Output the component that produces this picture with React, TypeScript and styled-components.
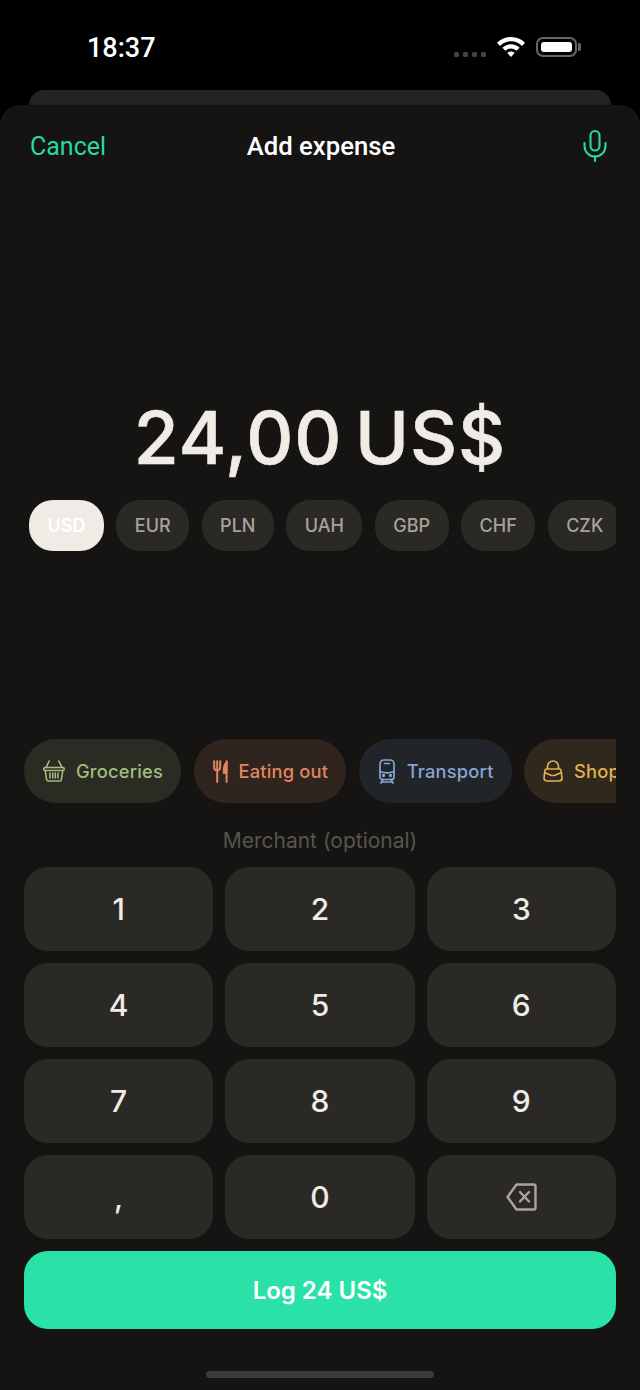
import { Mic } from 'lucide-react'
import styled, { createGlobalStyle } from 'styled-components'

const GlobalStyle = createGlobalStyle`
	html, body {
		margin: 0;
		padding: 0;
		background: #000;
	}
	* {
		box-sizing: border-box;
	}
`

const currencies = ['USD', 'EUR', 'PLN', 'UAH', 'GBP', 'CHF', 'CZK']
const keys = ['1', '2', '3', '4', '5', '6', '7', '8', '9', ',', '0']

function BasketIcon() {
	return (
		<svg width='22' height='22' viewBox='0 0 22 22' fill='none' stroke='currentColor' strokeWidth='1.6' strokeLinecap='round' strokeLinejoin='round' aria-hidden>
			<path d='M6.2 1 L3 7.5 M15.8 1 L19 7.5' />
			<rect x='0.8' y='7.5' width='20.4' height='3' rx='1.2' />
			<path d='M2.2 10.5 L3.6 19.5 a1.8 1.8 0 0 0 1.8 1.5 H16.6 a1.8 1.8 0 0 0 1.8-1.5 L19.8 10.5' />
			<path d='M7 13 V18 M9.7 13 V18 M12.3 13 V18 M15 13 V18' />
		</svg>
	)
}

function CutleryIcon() {
	return (
		<svg width='15' height='23' viewBox='0 0 15 23' fill='none' stroke='currentColor' strokeWidth='2' strokeLinecap='round' aria-hidden>
			<path d='M1.2 1.2 V7.5 a3 3 0 0 0 6 0 V1.2 M4.2 1.2 V22' />
			<path d='M13.6 1.2 V22' />
			<path d='M13.6 1.4 C10.8 3.5 10.2 8 10.2 13.5 H13.6 Z' fill='currentColor' strokeWidth='1' strokeLinejoin='round' />
		</svg>
	)
}

function TrainIcon() {
	return (
		<svg width='18' height='25' viewBox='-1 0 18 25' fill='none' stroke='currentColor' strokeWidth='1.7' strokeLinecap='round' strokeLinejoin='round' aria-hidden>
			<path d='M1 5 a4 4 0 0 1 4-4 H11 a4 4 0 0 1 4 4 V18 a2.5 2.5 0 0 1-2.5 2.5 H3.5 A2.5 2.5 0 0 1 1 18 Z' />
			<path d='M1 12.5 C5 14 11 14 15 12.5' />
			<path d='M5.5 4.5 H10.5' />
			<path d='M4 20.5 L2 24 M12 20.5 L14 24 M3 23 H13' />
			<circle cx='4.5' cy='16.5' r='0.8' fill='currentColor' />
			<circle cx='11.5' cy='16.5' r='0.8' fill='currentColor' />
		</svg>
	)
}

function BagIcon() {
	return (
		<svg width='20' height='22' viewBox='0 0 20 22' fill='none' stroke='currentColor' strokeWidth='1.7' strokeLinejoin='round' aria-hidden>
			<path d='M4.5 9 V6.5 a5.5 5.5 0 0 1 11 0 V9' />
			<path d='M3.5 9 H16.5 a1.5 1.5 0 0 1 1.5 1.2 L19 18 a3 3 0 0 1-3 3 H4 a3 3 0 0 1-3-3 L2 10.2 A1.5 1.5 0 0 1 3.5 9 Z' />
			<path d='M1.6 12.5 L8.5 15.5 H11.5 L18.4 12.5' />
		</svg>
	)
}

function BackspaceIcon() {
	return (
		<svg width='31' height='28' viewBox='0 0 31 28' fill='none' stroke='#aaa59c' strokeWidth='2.4' strokeLinecap='round' strokeLinejoin='round' aria-hidden>
			<path d='M10.5 1.5 H28 a1.5 1.5 0 0 1 1.5 1.5 V25 a1.5 1.5 0 0 1-1.5 1.5 H10.5 L1.5 14 Z' />
			<path d='M14 9 L23 18.5 M23 9 L14 18.5' />
		</svg>
	)
}

function WifiIcon() {
	return (
		<svg width='28' height='20' viewBox='0 0 28 20' fill='#fff' aria-hidden>
			<path d='M14 0 C19.5 0 24.5 2.2 28 5.8 L25 8.9 C22.2 6 18.3 4.2 14 4.2 C9.7 4.2 5.8 6 3 8.9 L0 5.8 C3.5 2.2 8.5 0 14 0 Z' />
			<path d='M14 7.2 C17.4 7.2 20.4 8.6 22.6 10.8 L19.6 13.8 C18.2 12.4 16.2 11.4 14 11.4 C11.8 11.4 9.8 12.4 8.4 13.8 L5.4 10.8 C7.6 8.6 10.6 7.2 14 7.2 Z' />
			<path d='M14 14.5 C15.4 14.5 16.6 15 17.6 16 L14 20 L10.4 16 C11.4 15 12.6 14.5 14 14.5 Z' />
		</svg>
	)
}

export default function App() {
	return (
		<>
			<GlobalStyle />
			<Screen>
				<StatusBar>
					<Clock>18:37</Clock>
					<StatusIcons>
						<SignalDots>
							<Dot />
							<Dot />
							<Dot />
							<Dot />
						</SignalDots>
						<WifiIcon />
						<Battery>
							<BatteryFill />
						</Battery>
					</StatusIcons>
				</StatusBar>
				<BackSheet />
				<Sheet>
					<Header>
						<Cancel>Cancel</Cancel>
						<Title>Add expense</Title>
						<MicButton>
							<Mic size={36} strokeWidth={1.4} />
						</MicButton>
					</Header>
					<Amount>24,00 US$</Amount>
					<CurrencyRow>
						{currencies.map((code) => (
							<CurrencyChip key={code} $active={code === 'USD'}>
								{code}
							</CurrencyChip>
						))}
					</CurrencyRow>
					<CategoryRow>
						<CategoryChip $bg='#2a2b22' $fg='#a3bc7f'>
							<BasketIcon />
							Groceries
						</CategoryChip>
						<CategoryChip $bg='#30241f' $fg='#e0875f'>
							<CutleryIcon />
							Eating out
						</CategoryChip>
						<CategoryChip $bg='#212429' $fg='#86a5cf'>
							<TrainIcon />
							Transport
						</CategoryChip>
						<CategoryChip $bg='#30281c' $fg='#e0b050'>
							<BagIcon />
							Shopping
						</CategoryChip>
					</CategoryRow>
					<Merchant>Merchant (optional)</Merchant>
					<Keypad>
						{keys.map((key) => (
							<Key key={key}>{key}</Key>
						))}
						<Key aria-label='Delete'>
							<BackspaceIcon />
						</Key>
					</Keypad>
					<LogButton>Log 24 US$</LogButton>
					<HomeIndicator />
				</Sheet>
			</Screen>
		</>
	)
}

const Screen = styled.div`
	width: 640px;
	height: 1390px;
	display: flex;
	flex-direction: column;
	background: #000;
	overflow: hidden;
	font-family: Inter, 'Liberation Sans', sans-serif;
`

const StatusBar = styled.div`
	height: 90px;
	display: flex;
	align-items: flex-start;
	justify-content: space-between;
	padding: 32px 63px 0 87px;
`

const Clock = styled.span`
	font-family: Roboto, sans-serif;
	font-size: 27px;
	line-height: 32px;
	font-weight: 500;
	color: #fff;
`

const StatusIcons = styled.div`
	display: flex;
	align-items: center;
	gap: 11px;
	height: 30px;
`

const SignalDots = styled.div`
	display: flex;
	gap: 4px;
	margin-top: 14px;
`

const Dot = styled.span`
	width: 5px;
	height: 5px;
	border-radius: 1.5px;
	background: #444;
`

const Battery = styled.div`
	position: relative;
	width: 41px;
	height: 20px;
	padding: 3px;
	border: 2px solid #666;
	border-radius: 7px;

	&::after {
		content: '';
		position: absolute;
		right: -6px;
		top: 4px;
		width: 3px;
		height: 8px;
		border-radius: 0 2px 2px 0;
		background: #666;
	}
`

const BatteryFill = styled.div`
	width: 100%;
	height: 100%;
	border-radius: 3px;
	background: #fff;
`

const BackSheet = styled.div`
	height: 15px;
	margin: 0 29px;
	background: #232323;
	border-radius: 16px 16px 0 0;
`

const Sheet = styled.div`
	flex: 1;
	display: flex;
	flex-direction: column;
	background: #151412;
	border-radius: 20px 20px 0 0;
`

const Header = styled.div`
	display: grid;
	grid-template-columns: 1fr auto 1fr;
	align-items: center;
	height: 82px;
	padding: 0 27px 0 29px;
`

const Cancel = styled.span`
	margin-left: 1px;
	font-family: Roboto, sans-serif;
	font-size: 25px;
	color: #26d9a0;
`

const Title = styled.span`
	font-family: Roboto, sans-serif;
	font-size: 25.7px;
	font-weight: 500;
	color: #fff;
`

const MicButton = styled.span`
	justify-self: end;
	display: flex;
	color: #26d9a0;
`

const Amount = styled.div`
	margin-top: 205px;
	height: 92px;
	line-height: 92px;
	text-align: center;
	font-size: 73px;
	font-weight: 500;
	letter-spacing: 1px;
	word-spacing: -8px;
	color: #efebe5;
	-webkit-text-stroke: 0.6px #efebe5;
`

const CurrencyRow = styled.div`
	display: flex;
	gap: 12.4px;
	margin: 16px 24px 0 29px;
	overflow: hidden;
`

const CurrencyChip = styled.span<{ $active: boolean }>`
	flex: none;
	height: 51px;
	padding: 0 18.5px;
	display: flex;
	align-items: center;
	border-radius: 24px;
	font-size: 18px;
	font-weight: ${(p) => (p.$active ? 600 : 500)};
	background: ${(p) => (p.$active ? '#efebe5' : '#2b2925')};
	color: ${(p) => (p.$active ? '#fff' : '#a8a399')};
`

const CategoryRow = styled.div`
	display: flex;
	gap: 12.5px;
	margin: 188px 24px 0;
	overflow: hidden;
`

const CategoryChip = styled.span<{ $bg: string; $fg: string }>`
	flex: none;
	height: 64px;
	padding: 0 18px 0 19px;
	display: flex;
	align-items: center;
	gap: 11px;
	border-radius: 32px;
	font-size: 18.3px;
	font-weight: 500;
	letter-spacing: 0.2px;
	background: ${(p) => p.$bg};
	color: ${(p) => p.$fg};
`

const Merchant = styled.div`
	margin-top: 24px;
	height: 28px;
	line-height: 28px;
	text-align: center;
	font-size: 21px;
	color: #57554f;
`

const Keypad = styled.div`
	display: grid;
	grid-template-columns: repeat(3, 1fr);
	grid-auto-rows: 84px;
	gap: 12px;
	margin: 12px 24px 0;
`

const Key = styled.div`
	display: flex;
	align-items: center;
	justify-content: center;
	border-radius: 24px;
	background: #2b2925;
	font-size: 30px;
	font-weight: 450;
	color: #efebe5;
`

const LogButton = styled.div`
	height: 78px;
	margin: 12px 24px 0;
	display: flex;
	align-items: center;
	justify-content: center;
	border-radius: 24px;
	background: #2ae2a8;
	font-size: 24px;
	font-weight: 600;
	color: #fff;
`

const HomeIndicator = styled.div`
	width: 228px;
	height: 7px;
	margin: 42px auto 0;
	border-radius: 4px;
	background: #3b3b3b;
`
